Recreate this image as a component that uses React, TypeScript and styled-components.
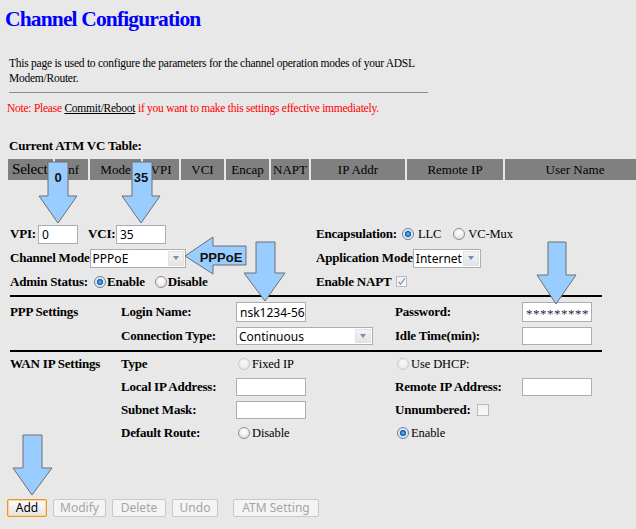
import React from "react";
import styled, { createGlobalStyle, css } from "styled-components";

const GlobalStyle = createGlobalStyle`
  html, body { margin: 0; padding: 0; background: #e8e8e8; overflow: hidden; }
  body { font-family: "Liberation Serif", "Times New Roman", serif; color: #000; }
  * { box-sizing: border-box; }
`;

const Page = styled.div`
  position: relative;
  width: 636px;
  height: 529px;
  overflow: hidden;
  background: #e8e8e8;
`;

const Title = styled.h1`
  margin: 4px 0 0 5px;
  font: bold 21.5px/30px "Liberation Serif", serif;
  letter-spacing: -0.85px;
  color: #0000ff;
  white-space: nowrap;
`;

const Intro = styled.p`
  margin: 22px 0 0 9px;
  width: 420px;
  font-size: 11.5px;
  line-height: 15px;
  letter-spacing: -0.25px;
`;

const ThinRule = styled.div`
  margin: 6px 0 0 9px;
  width: 419px;
  height: 1px;
  background: #8a8a8a;
`;

const Note = styled.p`
  margin: 8px 0 0 7px;
  font-size: 11.5px;
  line-height: 15px;
  letter-spacing: -0.25px;
  color: #ff0000;
  white-space: nowrap;
`;

const NoteLink = styled.a`
  color: #000;
  text-decoration: underline;
`;

const Caption = styled.div`
  margin: 22px 0 0 9px;
  font: bold 13px/16px "Liberation Serif", serif;
  letter-spacing: -0.2px;
`;

const HeaderRow = styled.div`
  display: flex;
  gap: 2px;
  margin: 5px 0 0 8px;
  height: 21px;
  width: max-content;
`;

const HeaderCell = styled.div<{ $w: number; $big?: boolean }>`
  flex: none;
  width: ${(p) => p.$w}px;
  height: 21px;
  background: #808080;
  color: #000;
  font-size: 13px;
  line-height: 21px;
  text-align: center;
  white-space: nowrap;
  overflow: hidden;
  ${(p) =>
    p.$big &&
    css`
      font-size: 15px;
      text-align: left;
      padding-left: 4px;
      letter-spacing: -0.2px;
    `}
`;

const TopForm = styled.div`
  margin-top: 42px;
  padding-left: 10px;
  display: grid;
  grid-template-columns: 306px auto;
  grid-template-rows: 24px 24px 23px;
`;

const Cell = styled.div`
  display: flex;
  align-items: center;
  white-space: nowrap;
`;

const Divider = styled.div`
  margin: 2px 0 0 10px;
  width: 592px;
  height: 2px;
  background: #000;
`;

const Settings = styled.div<{ $rowH: number; $top: number }>`
  margin-top: ${(p) => p.$top}px;
  padding-left: 10px;
  display: grid;
  grid-template-columns: 111px 115px 159px 127px 90px;
  grid-auto-rows: ${(p) => p.$rowH}px;
`;

const Label = styled.span<{ $w?: number; $ml?: number }>`
  flex: none;
  display: inline-block;
  ${(p) => (p.$w ? `min-width: ${p.$w}px;` : "")}
  margin-left: ${(p) => p.$ml ?? 0}px;
  font: bold 13px/16px "Liberation Serif", serif;
  letter-spacing: -0.2px;
  white-space: nowrap;
`;

const Choice = styled.span<{ $ml?: number; $bold?: boolean }>`
  flex: none;
  margin-left: ${(p) => p.$ml ?? 0}px;
  font: ${(p) => (p.$bold ? "bold 13px/16px" : "12.5px/16px")} "Liberation Serif", serif;
  letter-spacing: ${(p) => (p.$bold ? "-0.2px" : "-0.1px")};
  white-space: nowrap;
`;

const TextInput = styled.input<{ $w: number; $h: number; $ml?: number; $secret?: boolean }>`
  flex: none;
  width: ${(p) => p.$w}px;
  height: ${(p) => p.$h}px;
  margin: 0 0 0 ${(p) => p.$ml ?? 0}px;
  padding: 0 0 0 3px;
  border: 1px solid #abadb3;
  background: #fff;
  font: 12px "Noto Sans", "Open Sans", sans-serif;
  color: #000;
  outline: none;
  ${(p) =>
    p.$secret &&
    css`
      font: 13px "Liberation Serif", serif;
      letter-spacing: 0.5px;
      color: #2a2a40;
      padding-top: 3px;
    `}
`;

const Radio = styled.input.attrs({ type: "radio" })<{ $ml?: number }>`
  appearance: none;
  flex: none;
  margin: 0 0 0 ${(p) => p.$ml ?? 0}px;
  width: 12px;
  height: 12px;
  border-radius: 50%;
  border: 1px solid #8e8f8f;
  background: radial-gradient(circle at 50% 35%, #ffffff 0, #f1f1f1 45%, #d3d3d3 100%);
  &:checked {
    border-color: #6a7f99;
    background: radial-gradient(
      circle at 50% 50%,
      #7cc4f8 0,
      #2f82d6 1.6px,
      #1d5ca8 2.8px,
      #d6e4f2 3.4px,
      #f7fafd 100%
    );
  }
  &:disabled {
    border-color: #c8c8c8;
    background: radial-gradient(circle at 50% 35%, #fafafa 0, #ececec 60%, #e0e0e0 100%);
  }
`;

const CheckBox = styled.span<{ $ml?: number; $size: number }>`
  flex: none;
  display: inline-flex;
  align-items: center;
  justify-content: center;
  width: ${(p) => p.$size}px;
  height: ${(p) => p.$size}px;
  margin-left: ${(p) => p.$ml ?? 0}px;
  border: 1px solid #b9b9b9;
  background: linear-gradient(#f0f0f0, #fafafa);
`;

const SelectBox = styled.div<{ $w: number; $h: number }>`
  flex: none;
  display: flex;
  width: ${(p) => p.$w}px;
  height: ${(p) => p.$h}px;
  border: 1px solid #abadb3;
  background: #fff;
  font: 12px "Noto Sans", "Open Sans", sans-serif;
`;

const SelectValue = styled.span`
  flex: 1;
  display: flex;
  align-items: center;
  padding-left: 2px;
  white-space: nowrap;
  overflow: hidden;
`;

const DropButton = styled.span`
  flex: none;
  width: 16px;
  margin: 1px;
  display: flex;
  align-items: center;
  justify-content: center;
  border: 1px solid #e2e2e2;
  background: linear-gradient(#f4f4f4, #e4e4e4);
`;

const Caret = styled.span`
  width: 0;
  height: 0;
  border-left: 3.5px solid transparent;
  border-right: 3.5px solid transparent;
  border-top: 4px solid #6f8fb8;
`;

const ButtonBar = styled.div`
  display: flex;
  gap: 6px;
  margin: 55px 0 0 7px;
`;

const Btn = styled.button<{ $w: number; $ml?: number; $focus?: boolean }>`
  flex: none;
  width: ${(p) => p.$w}px;
  height: 18px;
  margin-left: ${(p) => p.$ml ?? 0}px;
  padding: 0;
  font: 12px/16px "Noto Sans", "Open Sans", sans-serif;
  border: 1px solid #c8c8c8;
  border-radius: 2px;
  background: #f4f4f4;
  color: #a5a5a5;
  ${(p) =>
    p.$focus &&
    css`
      border-color: #e69a1f;
      box-shadow: inset 0 0 0 1px #fbd595;
      background: linear-gradient(#fdfdfd, #e4e4e4);
      color: #000;
    `}
`;

const Annotations = styled.svg`
  position: absolute;
  left: 0;
  top: 0;
  pointer-events: none;
`;

const ArrowShape = styled.polygon`
  fill: #99ccff;
  stroke: #6e6e6e;
  stroke-width: 1;
`;

const ArrowText = styled.text`
  font: bold 13px "Liberation Sans", Arial, sans-serif;
  fill: #111;
  text-anchor: middle;
`;

function Select({ w, h, value }: { w: number; h: number; value: string }) {
  return (
    <SelectBox $w={w} $h={h}>
      <SelectValue>{value}</SelectValue>
      <DropButton>
        <Caret />
      </DropButton>
    </SelectBox>
  );
}

function Check({ checked, size, ml }: { checked?: boolean; size: number; ml?: number }) {
  return (
    <CheckBox $size={size} $ml={ml}>
      {checked && (
        <svg width="9" height="9" viewBox="0 0 9 9">
          <path d="M1.5 4.8 L3.6 7.2 L7.8 1.4" fill="none" stroke="#7d9fc6" strokeWidth="1.3" />
        </svg>
      )}
    </CheckBox>
  );
}

const headers: { t: string; w: number; big?: boolean }[] = [
  { t: "Select", w: 45, big: true },
  { t: "Inf", w: 33 },
  { t: "Mode", w: 51 },
  { t: "VPI", w: 36 },
  { t: "VCI", w: 43 },
  { t: "Encap", w: 43 },
  { t: "NAPT", w: 38 },
  { t: "IP Addr", w: 94 },
  { t: "Remote IP", w: 96 },
  { t: "User Name", w: 140 },
];

const arrows: { pts: string; label?: string; lx?: number; ly?: number }[] = [
  { pts: "48,162 68,162 68,196 77,196 58,223 39,196 48,196", label: "0", lx: 58, ly: 182 },
  { pts: "132,162 152,162 152,196 160,196 141,223 122,196 132,196", label: "35", lx: 141, ly: 182 },
  { pts: "185,256 213,237 213,246 246,246 246,265 213,265 213,274", label: "PPPoE", lx: 221, ly: 262 },
  { pts: "256,242 275,242 275,273 285,273 265,301 244,273 256,273" },
  { pts: "548,242 566,242 566,275 576,275 556,304 537,275 548,275" },
  { pts: "23,435 42,435 42,468 52,468 32,495 13,468 23,468" },
];

export default function App() {
  return (
    <>
      <GlobalStyle />
      <Page>
        <Title>Channel Configuration</Title>
        <Intro>
          This page is used to configure the parameters for the channel operation modes of your ADSL
          Modem/Router.
        </Intro>
        <ThinRule />
        <Note>
          Note: Please <NoteLink>Commit/Reboot</NoteLink> if you want to make this settings effective
          immediately.
        </Note>
        <Caption>Current ATM VC Table:</Caption>
        <HeaderRow>
          {headers.map((h) => (
            <HeaderCell key={h.t} $w={h.w} $big={h.big}>
              {h.t}
            </HeaderCell>
          ))}
        </HeaderRow>

        <TopForm>
          <Cell>
            <Label $w={28}>VPI:</Label>
            <TextInput $w={40} $h={19} defaultValue="0" />
            <Label $w={28} $ml={10}>
              VCI:
            </Label>
            <TextInput $w={50} $h={19} defaultValue="35" />
          </Cell>
          <Cell>
            <Label $w={86}>Encapsulation:</Label>
            <Radio name="encap" defaultChecked />
            <Choice $ml={4}>LLC</Choice>
            <Radio name="encap" $ml={12} />
            <Choice $ml={3}>VC-Mux</Choice>
          </Cell>
          <Cell>
            <Label $w={78}>Channel Mode</Label>
            <Select w={96} h={19} value="PPPoE" />
          </Cell>
          <Cell>
            <Label $w={96}>Application Mode</Label>
            <Select w={68} h={19} value="Internet" />
          </Cell>
          <Cell>
            <Label $w={84}>Admin Status:</Label>
            <Radio name="admin" defaultChecked />
            <Choice $bold $ml={1}>
              Enable
            </Choice>
            <Radio name="admin" $ml={10} />
            <Choice $bold $ml={1}>
              Disable
            </Choice>
          </Cell>
          <Cell>
            <Label $w={80}>Enable NAPT</Label>
            <Check checked size={11} />
          </Cell>
        </TopForm>

        <Divider />

        <Settings $rowH={24} $top={3}>
          <Cell>
            <Label>PPP Settings</Label>
          </Cell>
          <Cell>
            <Label>Login Name:</Label>
          </Cell>
          <Cell>
            <TextInput $w={70} $h={20} defaultValue="nsk1234-56" />
          </Cell>
          <Cell>
            <Label>Password:</Label>
          </Cell>
          <Cell>
            <TextInput $w={70} $h={20} $secret defaultValue="*********" />
          </Cell>

          <Cell />
          <Cell>
            <Label>Connection Type:</Label>
          </Cell>
          <Cell>
            <Select w={137} h={18} value="Continuous" />
          </Cell>
          <Cell>
            <Label>Idle Time(min):</Label>
          </Cell>
          <Cell>
            <TextInput $w={70} $h={18} defaultValue="" />
          </Cell>
        </Settings>

        <Divider />

        <Settings $rowH={23} $top={0}>
          <Cell>
            <Label>WAN IP Settings</Label>
          </Cell>
          <Cell>
            <Label>Type</Label>
          </Cell>
          <Cell>
            <Radio name="iptype" disabled $ml={2} />
            <Choice $ml={2}>Fixed IP</Choice>
          </Cell>
          <Cell>
            <Radio name="iptype" disabled $ml={2} />
            <Choice $ml={2}>Use DHCP:</Choice>
          </Cell>
          <Cell />

          <Cell />
          <Cell>
            <Label>Local IP Address:</Label>
          </Cell>
          <Cell>
            <TextInput $w={70} $h={18} defaultValue="" />
          </Cell>
          <Cell>
            <Label>Remote IP Address:</Label>
          </Cell>
          <Cell>
            <TextInput $w={70} $h={18} defaultValue="" />
          </Cell>

          <Cell />
          <Cell>
            <Label>Subnet Mask:</Label>
          </Cell>
          <Cell>
            <TextInput $w={70} $h={18} defaultValue="" />
          </Cell>
          <Cell>
            <Label>Unnumbered:</Label>
            <Check size={12} ml={6} />
          </Cell>
          <Cell />

          <Cell />
          <Cell>
            <Label>Default Route:</Label>
          </Cell>
          <Cell>
            <Radio name="droute" $ml={2} />
            <Choice $ml={2}>Disable</Choice>
          </Cell>
          <Cell>
            <Radio name="droute" defaultChecked $ml={2} />
            <Choice $ml={2}>Enable</Choice>
          </Cell>
          <Cell />
        </Settings>

        <ButtonBar>
          <Btn $w={40} $focus>
            Add
          </Btn>
          <Btn $w={53} disabled>
            Modify
          </Btn>
          <Btn $w={54} disabled>
            Delete
          </Btn>
          <Btn $w={46} disabled>
            Undo
          </Btn>
          <Btn $w={86} $ml={9} disabled>
            ATM Setting
          </Btn>
        </ButtonBar>

        <Annotations width="636" height="529" viewBox="0 0 636 529">
          {arrows.map((a, i) => (
            <g key={i}>
              <ArrowShape points={a.pts} />
              {a.label && (
                <ArrowText x={a.lx} y={a.ly}>
                  {a.label}
                </ArrowText>
              )}
            </g>
          ))}
        </Annotations>
      </Page>
    </>
  );
}
